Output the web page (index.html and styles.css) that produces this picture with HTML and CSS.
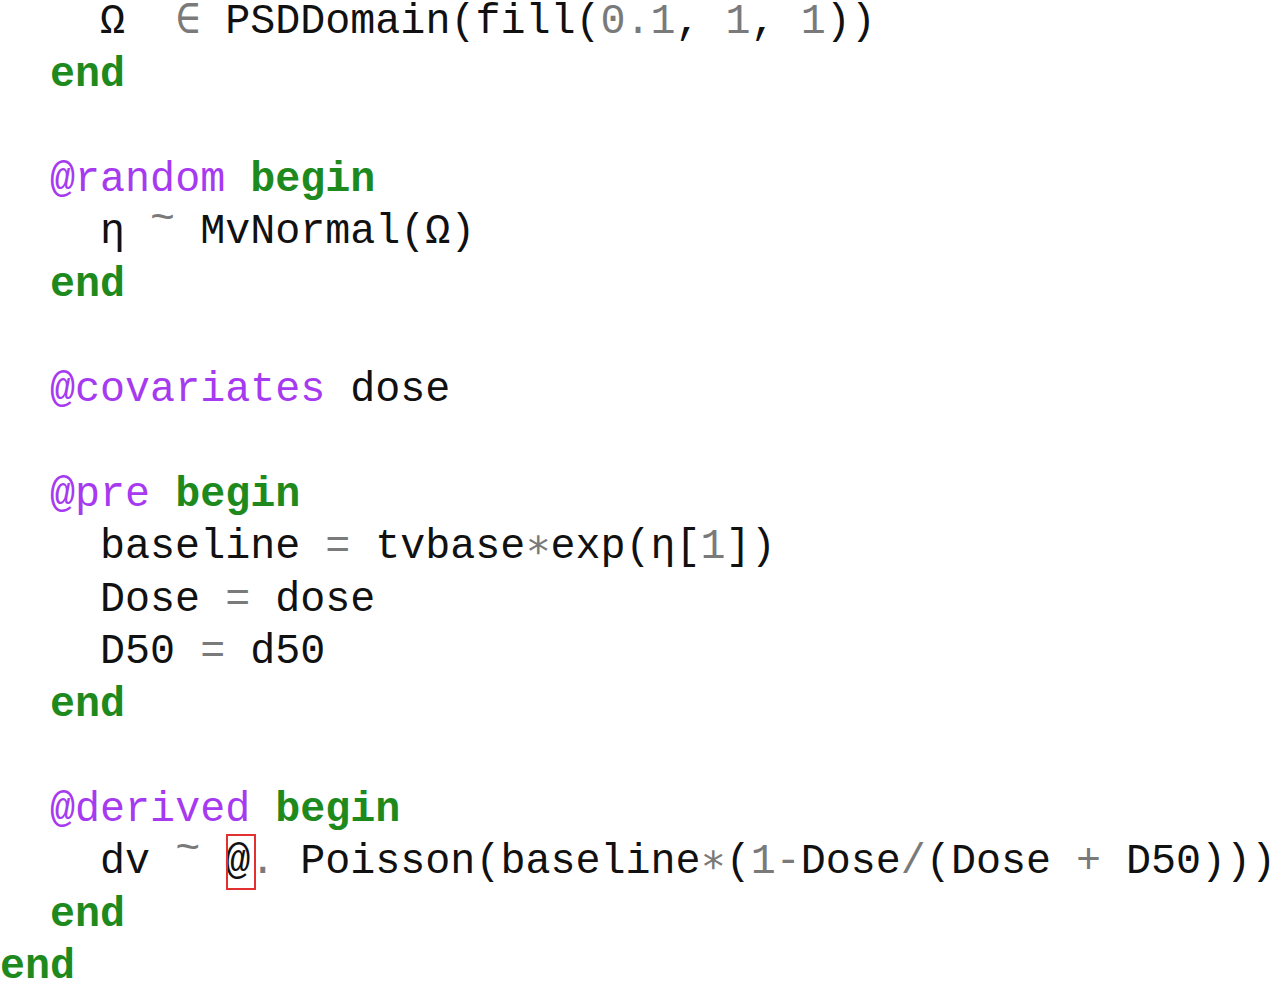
FILE: index.html
```html
<!DOCTYPE html>
<html>
<head>
<meta charset="utf-8">
<link rel="stylesheet" href="styles.css">
</head>
<body>
<div class="code">
<div class="line">    Ω  <span class="op">∈</span> PSDDomain(fill(<span class="num">0.1</span>, <span class="num">1</span>, <span class="num">1</span>))</div>
<div class="line">  <span class="kw">end</span></div>
<div class="line"> </div>
<div class="line">  <span class="mac">@random</span> <span class="kw">begin</span></div>
<div class="line">    η <span class="op tilde">~</span> MvNormal(Ω)</div>
<div class="line">  <span class="kw">end</span></div>
<div class="line"> </div>
<div class="line">  <span class="mac">@covariates</span> dose</div>
<div class="line"> </div>
<div class="line">  <span class="mac">@pre</span> <span class="kw">begin</span></div>
<div class="line">    baseline <span class="op">=</span> tvbase<span class="op">∗</span>exp(η[<span class="num">1</span>])</div>
<div class="line">    Dose <span class="op">=</span> dose</div>
<div class="line">    D50 <span class="op">=</span> d50</div>
<div class="line">  <span class="kw">end</span></div>
<div class="line"> </div>
<div class="line">  <span class="mac">@derived</span> <span class="kw">begin</span></div>
<div class="line">    dv <span class="op tilde">~</span> <span class="mark">@</span><span class="op">.</span> Poisson(baseline<span class="op">∗</span>(<span class="num">1</span><span class="op">-</span>Dose<span class="op">/</span>(Dose <span class="op">+</span> D50)))</div>
<div class="line">  <span class="kw">end</span></div>
<div class="line"><span class="kw">end</span></div>
</div>
</body>
</html>
```
FILE: styles.css
```css
html, body {
  margin: 0;
  padding: 0;
  background: #ffffff;
  overflow: hidden;
}
.code {
  margin: -4px 0 0 0;
  padding: 0;
  font-family: "Liberation Mono", "DejaVu Sans Mono", monospace;
  font-size: 41.7px;
  line-height: 52.5px;
  color: #111111;
}
.line {
  white-space: pre;
  height: 52.5px;
}
.kw {
  color: #1e8a1e;
  font-weight: bold;
}
.mac {
  color: #a63af0;
}
.op {
  color: #7a7a7a;
}
.num {
  color: #7a7a7a;
}
.tilde {
  position: relative;
  top: -12px;
}
.mark {
  position: relative;
}
.mark::after {
  content: "";
  position: absolute;
  left: 1px;
  right: -6px;
  top: -4px;
  bottom: -4px;
  border: 2px solid #e23030;
}
```
